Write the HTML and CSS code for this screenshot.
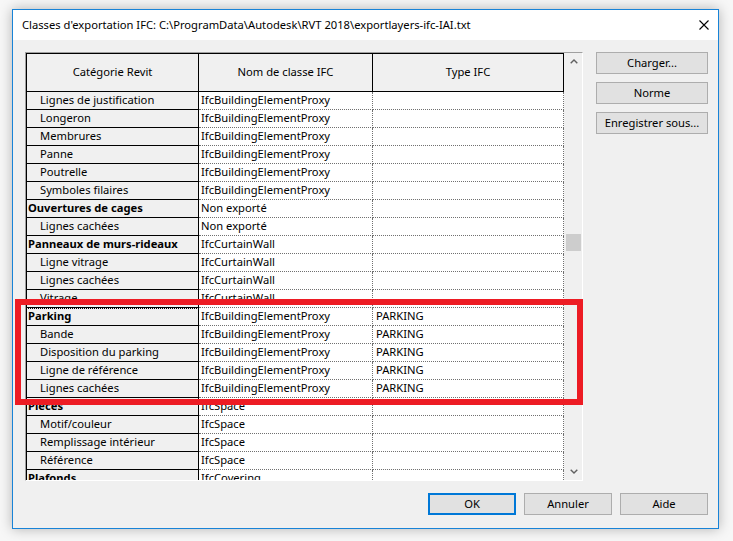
FILE: index.html
```html
<!DOCTYPE html>
<html lang="fr">
<head>
<meta charset="utf-8">
<title>Classes d'exportation IFC</title>
<link rel="stylesheet" href="styles.css">
</head>
<body>
<div class="window">
  <div class="titlebar">
    <span class="title">Classes d'exportation IFC: C:\ProgramData\Autodesk\RVT 2018\exportlayers-ifc-IAI.txt</span>
    <svg class="close" width="10" height="10" viewBox="0 0 10 10"><path d="M0.5 0.5 L9.5 9.5 M9.5 0.5 L0.5 9.5" stroke="#000" stroke-width="1.1" fill="none"/></svg>
  </div>
  <div class="client">
    <div class="main">
      <div class="grid">
        <div class="cols">
          <div class="hdr">
            <div class="c c1">Catégorie Revit</div>
            <div class="c c2">Nom de classe IFC</div>
            <div class="c c3">Type IFC</div>
          </div>
          <div class="rows">
            <div class="row"><div class="c c1 child">Lignes de justification</div><div class="c c2">IfcBuildingElementProxy</div><div class="c c3"></div></div>
            <div class="row"><div class="c c1 child">Longeron</div><div class="c c2">IfcBuildingElementProxy</div><div class="c c3"></div></div>
            <div class="row"><div class="c c1 child">Membrures</div><div class="c c2">IfcBuildingElementProxy</div><div class="c c3"></div></div>
            <div class="row"><div class="c c1 child">Panne</div><div class="c c2">IfcBuildingElementProxy</div><div class="c c3"></div></div>
            <div class="row"><div class="c c1 child">Poutrelle</div><div class="c c2">IfcBuildingElementProxy</div><div class="c c3"></div></div>
            <div class="row"><div class="c c1 child">Symboles filaires</div><div class="c c2">IfcBuildingElementProxy</div><div class="c c3"></div></div>
            <div class="row"><div class="c c1 parent">Ouvertures de cages</div><div class="c c2">Non exporté</div><div class="c c3"></div></div>
            <div class="row"><div class="c c1 child">Lignes cachées</div><div class="c c2">Non exporté</div><div class="c c3"></div></div>
            <div class="row"><div class="c c1 parent">Panneaux de murs-rideaux</div><div class="c c2">IfcCurtainWall</div><div class="c c3"></div></div>
            <div class="row"><div class="c c1 child">Ligne vitrage</div><div class="c c2">IfcCurtainWall</div><div class="c c3"></div></div>
            <div class="row"><div class="c c1 child">Lignes cachées</div><div class="c c2">IfcCurtainWall</div><div class="c c3"></div></div>
            <div class="row"><div class="c c1 child">Vitrage</div><div class="c c2">IfcCurtainWall</div><div class="c c3"></div></div>
            <div class="row"><div class="c c1 parent focus">Parking</div><div class="c c2">IfcBuildingElementProxy</div><div class="c c3">PARKING</div></div>
            <div class="row"><div class="c c1 child">Bande</div><div class="c c2">IfcBuildingElementProxy</div><div class="c c3">PARKING</div></div>
            <div class="row"><div class="c c1 child">Disposition du parking</div><div class="c c2">IfcBuildingElementProxy</div><div class="c c3">PARKING</div></div>
            <div class="row"><div class="c c1 child">Ligne de référence</div><div class="c c2">IfcBuildingElementProxy</div><div class="c c3">PARKING</div></div>
            <div class="row"><div class="c c1 child">Lignes cachées</div><div class="c c2">IfcBuildingElementProxy</div><div class="c c3">PARKING</div></div>
            <div class="row"><div class="c c1 parent">Pièces</div><div class="c c2">IfcSpace</div><div class="c c3"></div></div>
            <div class="row"><div class="c c1 child">Motif/couleur</div><div class="c c2">IfcSpace</div><div class="c c3"></div></div>
            <div class="row"><div class="c c1 child">Remplissage intérieur</div><div class="c c2">IfcSpace</div><div class="c c3"></div></div>
            <div class="row"><div class="c c1 child">Référence</div><div class="c c2">IfcSpace</div><div class="c c3"></div></div>
            <div class="row"><div class="c c1 parent">Plafonds</div><div class="c c2">IfcCovering</div><div class="c c3"></div></div>
          </div>
        </div>
        <div class="sb">
          <div class="arrow"><svg width="8" height="5" viewBox="0 0 8 5"><path d="M0.7 4.3 L4 1 L7.3 4.3" stroke="#606060" stroke-width="1.4" fill="none"/></svg></div>
          <div class="track"><div class="thumb"></div></div>
          <div class="arrow"><svg width="8" height="5" viewBox="0 0 8 5"><path d="M0.7 0.7 L4 4 L7.3 0.7" stroke="#606060" stroke-width="1.4" fill="none"/></svg></div>
        </div>
      </div>
      <div class="side">
        <button class="btn">Charger...</button>
        <button class="btn">Norme</button>
        <button class="btn">Enregistrer sous...</button>
      </div>
    </div>
    <div class="footer">
      <button class="btn fbtn default">OK</button>
      <button class="btn fbtn">Annuler</button>
      <button class="btn fbtn">Aide</button>
    </div>
  </div>
</div>
<div class="highlight"></div>
</body>
</html>
```
FILE: styles.css
```css
html, body {
  margin: 0;
}
body {
  position: relative;
  width: 733px;
  height: 541px;
  box-sizing: border-box;
  padding: 9px 0 0 12px;
  overflow: hidden;
  background: #f7f7f7;
  font-family: "Noto Sans", "Open Sans", sans-serif;
  font-size: 11.2px;
  color: #000;
}
.window {
  width: 707px;
  height: 520px;
  box-sizing: border-box;
  border: 1px solid #1883d7;
  background: #f0f0f0;
  box-shadow: 0 0 12px rgba(0, 0, 0, 0.28);
  display: flex;
  flex-direction: column;
}
.titlebar {
  height: 30px;
  flex: none;
  background: #fff;
  display: flex;
  align-items: center;
  justify-content: space-between;
  padding: 0 9px 1px 9px;
  box-sizing: border-box;
}
.title {
  white-space: nowrap;
}
.close {
  display: block;
}
.client {
  flex: 1;
  padding: 12px 10px 0 12px;
}
.main {
  display: flex;
  align-items: flex-start;
}
.grid {
  width: 558px;
  height: 429px;
  box-sizing: border-box;
  border: 1px solid;
  border-color: #a0a0a0 #ffffff #ffffff #a0a0a0;
  display: flex;
  background: #f0f0f0;
}
.cols {
  width: 538px;
  display: flex;
  flex-direction: column;
}
.c {
  box-sizing: border-box;
  white-space: nowrap;
  overflow: hidden;
}
.c1 {
  width: 173px;
  border-left: 1px solid #000;
  border-right: 1px solid #000;
}
.c2 {
  width: 174px;
}
.c3 {
  width: 191px;
}
.hdr {
  display: flex;
  height: 39px;
  flex: none;
  box-sizing: border-box;
  border-top: 1px solid #000;
  border-bottom: 1px solid #000;
}
.hdr .c {
  display: flex;
  align-items: center;
  justify-content: center;
  background: #f0f0f0;
  padding-bottom: 2px;
}
.hdr .c2, .hdr .c3 {
  border-right: 1px solid #000;
}
.rows {
  height: 388px;
  overflow: hidden;
}
.row {
  display: flex;
  height: 18px;
}
.row .c {
  line-height: 16px;
  padding-bottom: 1px;
  border-bottom: 1px solid #000;
}
.row .c1 {
  background: #f0f0f0;
}
.row .c2, .row .c3 {
  background: #fff;
  border-bottom: 1px dotted #707070;
  border-right: 1px dotted #707070;
}
.row .c2 {
  padding-left: 2px;
}
.row .c3 {
  padding-left: 3px;
}
.parent {
  font-weight: bold;
  padding-left: 1px;
}
.child {
  padding-left: 13px;
}
.focus {
  outline: 1px dotted #000;
  outline-offset: -1px;
}
.sb {
  width: 18px;
  display: flex;
  flex-direction: column;
  background: #f0f0f0;
}
.arrow {
  height: 17px;
  flex: none;
  display: flex;
  align-items: center;
  justify-content: center;
  padding-left: 1px;
}
.track {
  flex: 1;
}
.thumb {
  margin-top: 164px;
  margin-left: 2px;
  width: 15px;
  height: 17px;
  background: #cdcdcd;
}
.side {
  margin-left: 13px;
  display: flex;
  flex-direction: column;
  gap: 8px;
}
.btn {
  font: inherit;
  color: #000;
  width: 112px;
  height: 22px;
  padding: 0 0 1px 0;
  margin: 0;
  box-sizing: border-box;
  background: #e1e1e1;
  border: 1px solid #adadad;
  border-radius: 0;
}
.footer {
  display: flex;
  justify-content: flex-end;
  gap: 8px;
  margin-top: 12px;
}
.fbtn {
  width: 88px;
}
.default {
  border: 2px solid #0078d7;
}
.highlight {
  position: absolute;
  left: 15px;
  top: 299px;
  width: 568px;
  height: 106px;
  box-sizing: border-box;
  border: 6px solid #ed1c24;
}
```
